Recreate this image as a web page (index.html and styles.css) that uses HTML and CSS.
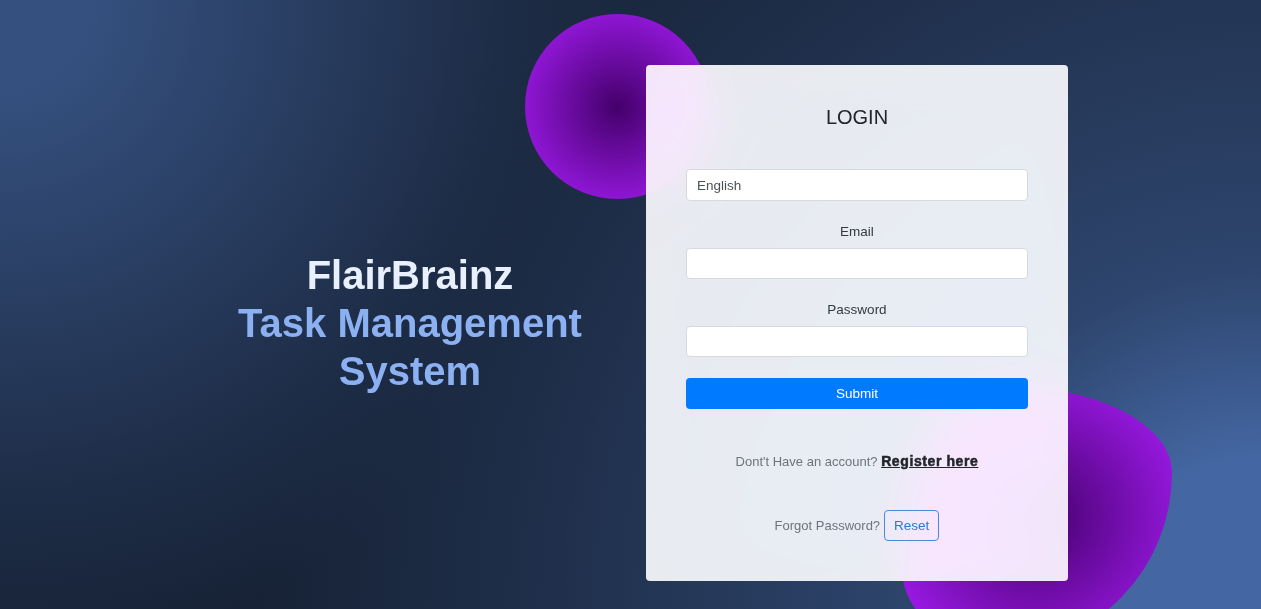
FILE: index.html
```html
<!DOCTYPE html>
<html lang="en">
<head>
<meta charset="utf-8">
<title>FlairBrainz - Login</title>
<link rel="stylesheet" href="styles.css">
</head>
<body>
<main class="page">
  <div class="wrap">
    <section class="hero">
      <h1 class="hero-title">FlairBrainz<br><span class="hero-accent">Task Management System</span></h1>
    </section>
    <section class="card-area">
      <div class="shape shape-circle"></div>
      <div class="shape shape-blob"></div>
      <form class="card">
        <h2 class="card-title">LOGIN</h2>
        <select class="field select">
          <option>English</option>
        </select>
        <label class="label" for="email">Email</label>
        <input class="field" id="email" type="email">
        <label class="label" for="password">Password</label>
        <input class="field" id="password" type="password">
        <button class="btn-submit" type="button">Submit</button>
        <p class="note register">Dont't Have an account? <a class="register-link" href="#">Register here</a></p>
        <p class="note forgot">Forgot Password? <button class="btn-reset" type="button">Reset</button></p>
      </form>
    </section>
  </div>
</main>
</body>
</html>
```

FILE: styles.css
```css
* { box-sizing: border-box; }

html, body {
  margin: 0;
  padding: 0;
}

body {
  font-family: "Liberation Sans", Arial, sans-serif;
  background-color: hsl(218, 41%, 15%);
}

.page {
  height: 609px;
  overflow: hidden;
  background-color: hsl(218, 41%, 15%);
  background-image:
    radial-gradient(650px circle at 0% 0%, hsl(218, 41%, 35%) 15%, hsl(218, 41%, 30%) 35%, hsl(218, 41%, 20%) 75%, hsl(218, 41%, 19%) 80%, transparent 100%),
    radial-gradient(1000px circle at 100% 100%, hsl(218, 41%, 45%) 15%, hsl(218, 41%, 30%) 35%, hsl(218, 41%, 20%) 75%, hsl(218, 41%, 19%) 80%, transparent 100%);
}

.wrap {
  display: flex;
  align-items: center;
  gap: 36px;
  padding: 65px 0 0 210px;
}

.hero {
  width: 400px;
  text-align: center;
}

.hero-title {
  margin: 0;
  font-size: 40px;
  line-height: 48px;
  font-weight: 700;
  color: hsl(218, 81%, 95%);
}

.hero-accent {
  color: hsl(218, 81%, 75%);
}

.card-area {
  position: relative;
  width: 422px;
}

.shape {
  position: absolute;
  background: radial-gradient(#44006b, #ad1fff);
}

.shape-circle {
  width: 185px;
  height: 185px;
  left: -121px;
  top: -51px;
  border-radius: 50%;
}

.shape-blob {
  width: 270px;
  height: 262px;
  right: -104px;
  top: 321px;
  border-radius: 38% 62% 63% 37% / 70% 33% 67% 30%;
}

.card {
  position: relative;
  display: flex;
  flex-direction: column;
  align-items: stretch;
  padding: 40px 40px 40px;
  border-radius: 4px;
  background-color: hsla(0, 0%, 100%, 0.9);
  backdrop-filter: saturate(200%) blur(25px);
  -webkit-backdrop-filter: saturate(200%) blur(25px);
}

.card-title {
  margin: 0 0 40px;
  font-size: 20px;
  line-height: 24px;
  font-weight: 400;
  text-align: center;
  color: #212529;
}

.field {
  display: block;
  width: 100%;
  height: 31px;
  padding: 0 10px;
  font-family: "Liberation Sans", Arial, sans-serif;
  font-size: 13.5px;
  color: #495057;
  background-color: #fff;
  border: 1px solid #d6dae0;
  border-radius: 4px;
  outline: none;
}

.select {
  height: 32px;
  margin-bottom: 20px;
  appearance: none;
  -webkit-appearance: none;
}

.label {
  display: block;
  text-align: center;
  font-size: 13.5px;
  line-height: 21px;
  color: #343a40;
  margin-bottom: 6px;
}

#email {
  margin-bottom: 20px;
}

#password {
  margin-bottom: 21px;
}

.btn-submit {
  height: 31px;
  border: 0;
  border-radius: 4px;
  background: #007bff;
  color: #fff;
  font-family: "Liberation Sans", Arial, sans-serif;
  font-size: 13.5px;
}

.note {
  margin: 0;
  text-align: center;
  font-size: 13px;
  line-height: 21px;
  color: #6c757d;
}

.register {
  margin-top: 42px;
}

.register-link {
  color: #212529;
  font-size: 14px;
  font-weight: 700;
  letter-spacing: 0.6px;
  -webkit-text-stroke: 0.5px #212529;
  text-decoration: underline;
}

.forgot {
  margin-top: 38px;
  display: flex;
  align-items: center;
  justify-content: center;
  gap: 4px;
}

.btn-reset {
  height: 31px;
  padding: 0 9px;
  background: transparent;
  border: 1px solid #4a8ad6;
  border-radius: 4px;
  color: #2a78d2;
  font-family: "Liberation Sans", Arial, sans-serif;
  font-size: 13.5px;
}
```
